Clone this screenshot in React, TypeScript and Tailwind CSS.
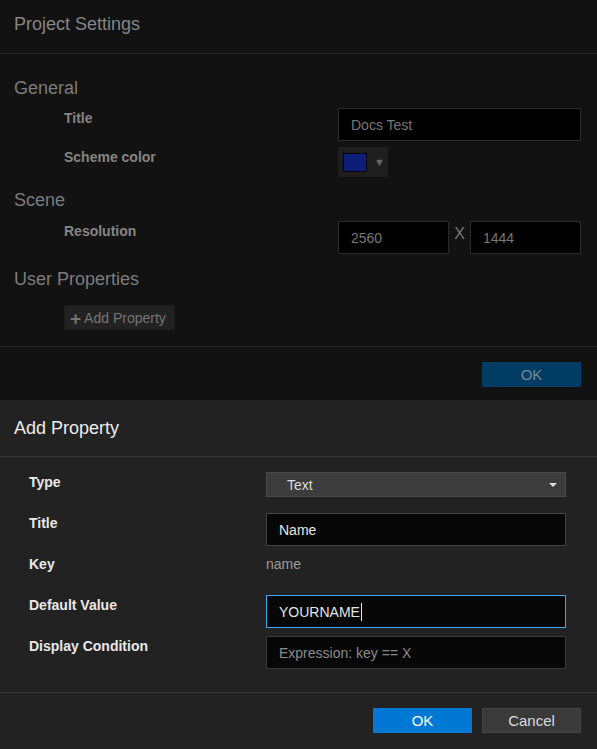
import React from "react";

const font = { fontFamily: '"Liberation Sans", Arial, sans-serif' };

function DimRow({ label, children }: { label: string; children: React.ReactNode }) {
  return (
    <div className="flex items-start">
      <div className="w-[338px] shrink-0 pl-[64px] text-[14px] font-bold leading-[21px] text-[#858585]">
        {label}
      </div>
      <div className="flex-1">{children}</div>
    </div>
  );
}

function DimInput({ value, className = "" }: { value: string; className?: string }) {
  return (
    <div
      className={`flex h-[33px] items-center border border-[#2a2a2a] bg-black pl-3 pt-px text-[14px] text-[#777] ${className}`}
    >
      {value}
    </div>
  );
}

function FormRow({ label, children }: { label: string; children: React.ReactNode }) {
  return (
    <div className="flex h-[33px] items-start">
      <div className="w-[266px] shrink-0 pl-[29px] text-[14px] font-bold leading-[21px] text-[#e8e8e8]">
        {label}
      </div>
      <div className="w-[300px]">{children}</div>
    </div>
  );
}

export default function App() {
  return (
    <div className="flex h-[749px] w-[597px] flex-col overflow-hidden" style={font}>
      {/* dimmed project settings dialog */}
      <div className="flex h-[400px] flex-col bg-[#121212]">
        <div className="flex h-[54px] items-center border-b border-[#262626] pb-[4px] pl-[14px] text-[18px] text-[#858585]">
          Project Settings
        </div>
        <div className="flex flex-col pt-[22px] pr-4">
          <div className="pl-[14px] text-[18px] leading-[24px] text-[#7c7c7c]">General</div>
          <div className="mt-[8px] flex flex-col gap-[6px]">
            <DimRow label="Title">
              <DimInput value="Docs Test" />
            </DimRow>
            <DimRow label="Scheme color">
              <div className="flex h-[30px] w-[50px] items-center gap-[7px] bg-[#1e1e1e] pl-[5px]">
                <div className="h-[19px] w-[24px] border border-black bg-[#0c1f78]" />
                <span className="text-[11px] text-[#666]">▼</span>
              </div>
            </DimRow>
          </div>
          <div className="mt-[11px] pl-[14px] text-[18px] leading-[24px] text-[#7c7c7c]">Scene</div>
          <div className="mt-[9px]">
            <DimRow label="Resolution">
              <div className="flex items-center">
                <DimInput value="2560" className="w-[111px]" />
                <span className="w-[21px] pb-[7px] text-center text-[16px] text-[#777]">X</span>
                <DimInput value="1444" className="w-[111px]" />
              </div>
            </DimRow>
          </div>
          <div className="mt-[13px] pl-[14px] text-[18px] leading-[24px] text-[#7c7c7c]">
            User Properties
          </div>
          <div className="mt-[14px] pl-[64px]">
            <div className="flex h-[25px] w-[111px] items-center gap-[3px] border border-[#1c1c1c] bg-[#222] pl-[5px] pt-px text-[14px] text-[#747474]">
              <span className="text-[19px] font-bold leading-none">+</span>
              <span>Add Property</span>
            </div>
          </div>
        </div>
        <div className="mt-[16px] flex flex-1 justify-end border-t border-[#262626] pt-[15px] pr-4">
          <div className="flex h-[25px] w-[99px] items-center justify-center bg-[#003c64] pt-px text-[15px] text-[#7a8896]">
            OK
          </div>
        </div>
      </div>

      {/* add property dialog */}
      <div className="flex flex-1 flex-col bg-[#222]">
        <div className="flex h-[57px] items-center border-b border-[#3a3a3a] pl-[14px] text-[18px] text-[#ececec]">
          Add Property
        </div>
        <div className="flex flex-col gap-[8px] pt-[15px]">
          <FormRow label="Type">
            <div className="flex h-[25px] items-center justify-between border border-[#4a4a4a] bg-[#3c3c3c] pl-[20px] pr-[8px] pt-px text-[14px] text-[#dcdcdc]">
              <span>Text</span>
              <svg width="8" height="4" viewBox="0 0 8 4">
                <path d="M0 0H8L4 4Z" fill="#e0e0e0" />
              </svg>
            </div>
          </FormRow>
          <FormRow label="Title">
            <div className="flex h-[33px] items-center border border-[#444] bg-[#070707] pl-3 pt-px text-[14px] text-[#e4e4e4]">
              Name
            </div>
          </FormRow>
          <FormRow label="Key">
            <div className="text-[14px] leading-[21px] text-[#9a9a9a]">name</div>
          </FormRow>
          <FormRow label="Default Value">
            <div className="flex h-[33px] items-center border border-[#3fa9f5] bg-[#070707] pl-3 pt-px text-[14px] text-[#e4e4e4]">
              YOURNAME
              <span className="ml-[1px] h-[18px] w-px bg-[#e4e4e4]" />
            </div>
          </FormRow>
          <FormRow label="Display Condition">
            <div className="flex h-[33px] items-center border border-[#3a3a3a] bg-[#070707] pl-3 pt-px text-[14px] text-[#8a8a8a]">
              Expression: key == X
            </div>
          </FormRow>
        </div>
        <div className="mt-[23px] flex flex-1 justify-end gap-[10px] border-t border-[#3a3a3a] pt-[15px] pr-4">
          <div className="flex h-[25px] w-[99px] items-center justify-center bg-[#0078d4] pt-px text-[15px] text-white">
            OK
          </div>
          <div className="flex h-[25px] w-[99px] items-center justify-center border border-[#444] bg-[#3a3a3a] pt-px text-[15px] text-[#dcdcdc]">
            Cancel
          </div>
        </div>
      </div>
    </div>
  );
}
